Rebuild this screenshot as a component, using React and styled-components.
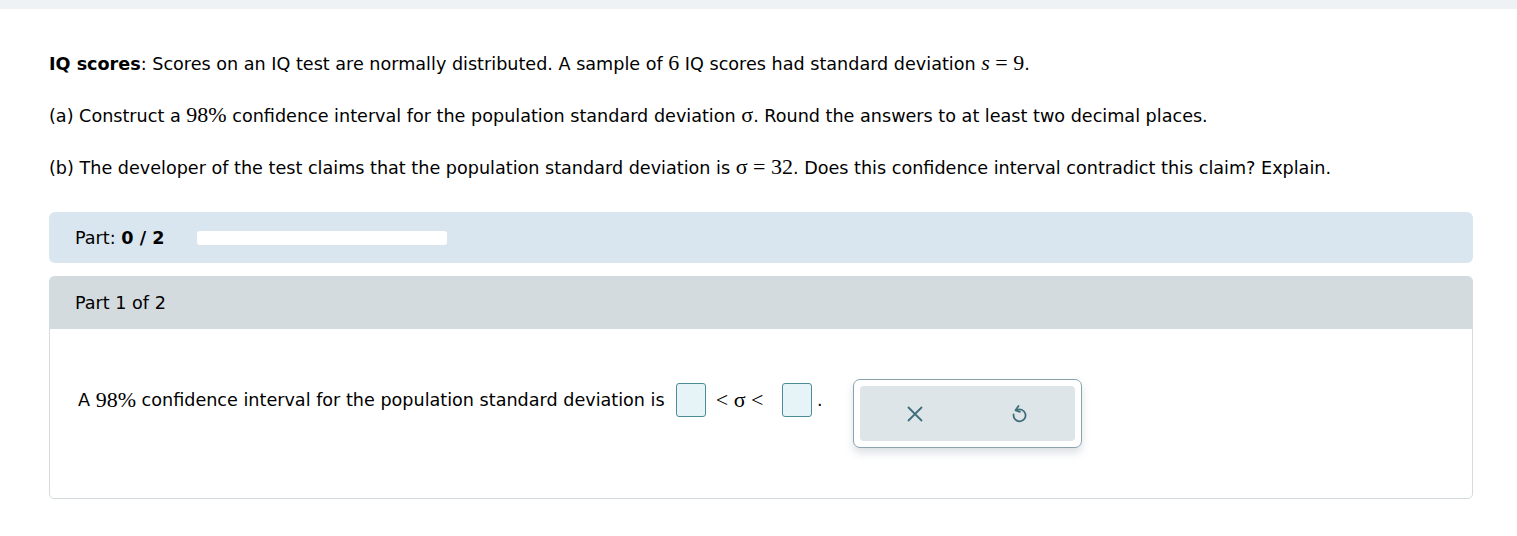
import styled, { createGlobalStyle } from "styled-components";

const Global = createGlobalStyle`
  body {
    margin: 0;
    background: #fff;
    font-family: "DejaVu Sans", Verdana, sans-serif;
    font-size: 17.6px;
    color: #000;
  }
`;

const TopBar = styled.div`
  height: 9px;
  background: #eef2f4;
`;

const Pagina = styled.main`
  padding: 43px 44px 0 49px;
`;

const Enunciado = styled.p`
  margin: 0 0 ${(p) => p.$gap || 28}px;
  line-height: 24px;
`;

const M = styled.span`
  font-family: "Liberation Serif", "Times New Roman", serif;
  font-size: 22px;
  line-height: 1;
  ${(p) => p.$italic && "font-style: italic;"}
`;

const BarraParte = styled.div`
  display: flex;
  align-items: center;
  gap: 33px;
  height: 51px;
  padding: 0 26px;
  background: #dae6ef;
  border-radius: 6px;
  margin-bottom: 13px;
`;

const Progresso = styled.div`
  width: 250px;
  height: 14px;
  background: #fff;
  border-radius: 3px;
`;

const Cartao = styled.section`
  border: 1px solid #d3dbde;
  border-radius: 5px;
  overflow: hidden;
`;

const CabecalhoCartao = styled.div`
  height: 52px;
  display: flex;
  align-items: center;
  padding: 0 25px;
  background: #d3dbde;
`;

const CorpoCartao = styled.div`
  height: 169px;
  display: flex;
  align-items: flex-start;
  padding: 50px 0 0 28px;
  box-sizing: border-box;
`;

const Resposta = styled.div`
  display: flex;
  align-items: center;
  margin-top: 4px;
`;

const Caixa = styled.span`
  display: inline-block;
  width: 28px;
  height: 32px;
  background: #e6f4f8;
  border: 1px solid #4a8d99;
  border-radius: 3px;
`;

const Relacao = styled.span`
  font-family: "Liberation Serif", "Times New Roman", serif;
  font-size: 22px;
  padding: 0 18px 0 10px;
`;

const Painel = styled.div`
  margin-left: 30px;
  padding: 6px;
  border: 1px solid #8aa3ad;
  border-radius: 7px;
  background: #fff;
  box-shadow: 0 5px 8px rgba(60, 90, 100, 0.18);
`;

const PainelInterno = styled.div`
  width: 215px;
  height: 55px;
  background: #dee5e8;
  border-radius: 4px;
  display: flex;
  align-items: center;
  justify-content: space-around;
  padding: 0 4px;
  box-sizing: border-box;
`;

const Botao = styled.button`
  border: none;
  background: none;
  padding: 0;
  width: 24px;
  height: 24px;
  display: flex;
  align-items: center;
  justify-content: center;
`;

function App() {
  return (
    <>
      <Global />
      <TopBar />
      <Pagina>
        <Enunciado>
          <b>IQ scores</b>: Scores on an IQ test are normally distributed. A sample of{" "}
          <M>6</M> IQ scores had standard deviation <M $italic>s</M>
          <M> = 9</M>.
        </Enunciado>
        <Enunciado>
          (a) Construct a <M>98%</M> confidence interval for the population standard deviation{" "}
          <M>σ</M>. Round the answers to at least two decimal places.
        </Enunciado>
        <Enunciado $gap={32}>
          (b) The developer of the test claims that the population standard deviation is{" "}
          <M>σ = 32</M>. Does this confidence interval contradict this claim? Explain.
        </Enunciado>

        <BarraParte>
          <span>
            Part: <b>0 / 2</b>
          </span>
          <Progresso />
        </BarraParte>

        <Cartao>
          <CabecalhoCartao>Part 1 of 2</CabecalhoCartao>
          <CorpoCartao>
            <Resposta>
              A&nbsp;<M>98%</M>&nbsp;confidence interval for the population standard deviation is&nbsp;&nbsp;
              <Caixa />
              <Relacao>&lt; σ &lt;</Relacao>
              <Caixa />
              <span>&nbsp;.</span>
            </Resposta>
            <Painel>
              <PainelInterno>
                <Botao aria-label="limpar">
                  <svg width="16" height="16" viewBox="0 0 16 16">
                    <path d="M1 1 L15 15 M15 1 L1 15" stroke="#3f6e7a" strokeWidth="1.8" fill="none" />
                  </svg>
                </Botao>
                <Botao aria-label="desfazer">
                  <svg width="16" height="20" viewBox="0 0 16 20">
                    <path
                      d="M5.5 6.2 A6 6 0 1 1 2.6 10.5"
                      stroke="#3f6e7a"
                      strokeWidth="1.8"
                      fill="none"
                      strokeLinecap="round"
                    />
                    <path d="M7.5 2 L4.5 6.3 L9 7.8" stroke="#3f6e7a" strokeWidth="1.8" fill="none" strokeLinecap="round" strokeLinejoin="round" />
                  </svg>
                </Botao>
              </PainelInterno>
            </Painel>
          </CorpoCartao>
        </Cartao>
      </Pagina>
    </>
  );
}

export default App;
